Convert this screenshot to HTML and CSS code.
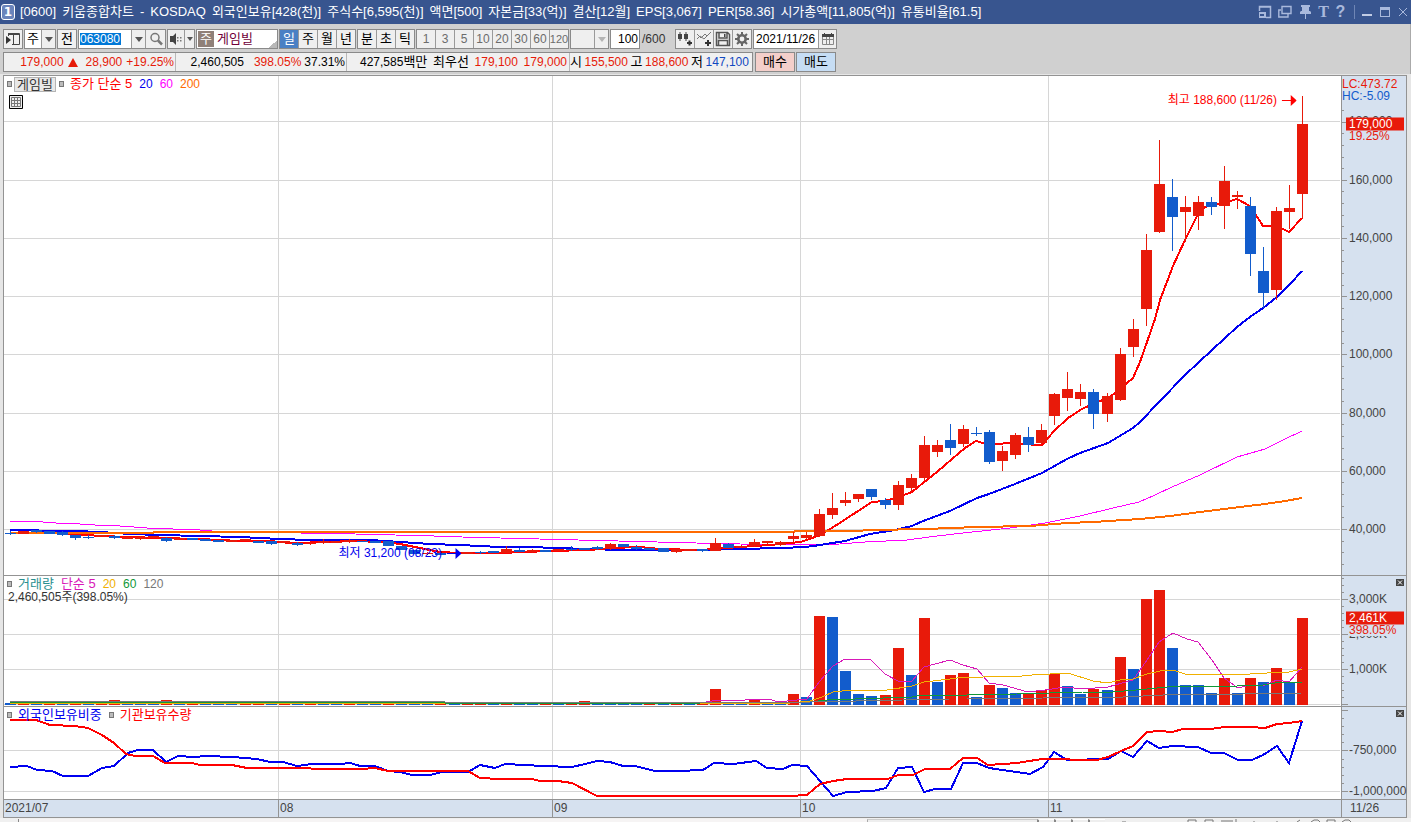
FILE: index.html
```html
<!DOCTYPE html>
<html lang="ko">
<head>
<meta charset="utf-8">
<title>[0600] 키움종합차트</title>
<link rel="stylesheet" href="styles.css">
</head>
<body>
<header class="titlebar">
  <span class="win-no">1</span>
  <h1 class="title"><span>[0600]</span><span>키움종합차트</span><span>-</span><span>KOSDAQ</span><span>외국인보유[428(천)]</span><span>주식수[6,595(천)]</span><span>액면[500]</span><span>자본금[33(억)]</span><span>결산[12월]</span><span>EPS[3,067]</span><span>PER[58.36]</span><span>시가총액[11,805(억)]</span><span>유통비율[61.5]</span></h1>
  <div class="win-tools">
    <button aria-label="화면 분할"><svg width="14" height="14" viewBox="0 0 14 14"><path d="M1.500 6V1.500h11v11H8M1 2h12" fill="none" stroke="#a9b9dc" stroke-width="1.500"/><path d="M1 7h7v6H1z" fill="#a9b9dc"/><path d="M2 9h4v2H2z" fill="#38558f"/></svg></button>
    <button aria-label="화면 복사"><svg width="14" height="14" viewBox="0 0 14 14"><path d="M4 1.500h9v7H4zM3 5H.8v7H10V9" fill="none" stroke="#a9b9dc" stroke-width="1.400"/></svg></button>
    <button aria-label="고정"><svg width="14" height="14" viewBox="0 0 14 14"><path d="M3 0h9v2h-1v4h1l1 1v2H2V7l1-1h1V2H3zM7 9h1v5H7z" fill="#a9b9dc"/></svg></button>
    <button class="glyph" aria-label="글꼴">T</button>
    <button class="glyph glyph-q" aria-label="도움말">?</button>
    <span class="divider"></span>
    <button aria-label="최소화"><svg width="12" height="14" viewBox="0 0 12 14"><path d="M1 9h10v2H1z" fill="#c1cce4"/></svg></button>
    <button aria-label="최대화"><svg width="12" height="14" viewBox="0 0 12 14"><path d="M1 2h10v10H1zM2 5v6h8V5z" fill="#a9b9dc" fill-rule="evenodd"/></svg></button>
    <button aria-label="닫기"><svg width="12" height="14" viewBox="0 0 12 14"><path d="M2 3l8 8M10 3l-8 8" stroke="#a9b9dc" fill="none"/></svg></button>
  </div>
</header>

<section class="toolbar">
  <div class="tools">
    <button class="box" aria-label="패널"><svg width="16" height="16" viewBox="0 0 16 16"><path d="M3.500 2.500h11v11H7M3.500 2v3M8.500 4v10M3 3.500h12" fill="none" stroke="#444"/><path d="M1 5l5 4-5 4z" fill="#333"/></svg></button>
    <div class="group g-kind">
      <button class="cell white">주</button><button class="cell w14" aria-label="종류 선택"><i class="arrow"></i></button>
    </div>
    <button class="box">전</button>
    <div class="group g-code">
      <input class="code" aria-label="종목코드" value="063080"><button class="cell w14" aria-label="종목 목록"><i class="arrow"></i></button><button class="cell w20" aria-label="검색"><svg width="16" height="16" viewBox="0 0 16 16"><circle cx="7" cy="6.500" r="4" fill="none" stroke="#777" stroke-width="1.500"/><path d="M10 9.500l4 4" stroke="#777" stroke-width="2.500"/></svg></button>
    </div>
    <div class="group g-sound">
      <button class="cell" aria-label="소리"><svg width="14" height="14" viewBox="0 0 14 14"><path d="M1 4h3l3-3v12l-3-3H1z" fill="#444"/><path d="M8 5h1.500v1.500H8zM8 8h1.500v1.500H8zM11 5h1.500v1.500H11zM11 8h1.500v1.500H11z" fill="#777"/></svg></button><button class="cell w10" aria-label="소리 선택"><i class="arrow small"></i></button>
    </div>
    <div class="name-box"><span class="badge">주</span><span class="stock">게임빌</span></div>
    <div class="group g-period"><button class="cell on">일</button><button class="cell">주</button><button class="cell">월</button><button class="cell">년</button></div>
    <div class="group g-tick"><button class="cell">분</button><button class="cell">초</button><button class="cell">틱</button></div>
    <div class="group g-minutes off"><button class="cell">1</button><button class="cell">3</button><button class="cell">5</button><button class="cell">10</button><button class="cell">20</button><button class="cell">30</button><button class="cell">60</button><button class="cell tight">120</button></div>
    <div class="group g-combo off"><span class="cell"></span><button class="cell w14" aria-label="주기 선택" disabled><i class="arrow pale"></i></button></div>
    <input class="count" aria-label="조회 개수" value="100">
    <span class="total">/600</span>
    <div class="group g-icons">
      <button class="cell" aria-label="차트 추가"><svg width="16" height="16" viewBox="0 0 16 16"><path d="M1 3h4v5H1zM2.500 1h1v9h-1zM7 3h4v5H7zM8.500 1h1v9h-1z" fill="#444"/><path d="M10 11h5v2h-5zM11.500 9.500h2v5h-2z" fill="#333"/></svg></button><button class="cell" aria-label="지표 추가"><svg width="16" height="16" viewBox="0 0 16 16"><path d="M1 3l4 4 4-4 2 2 4-4M1 8l3-3 4 3 3-3" fill="none" stroke="#777"/><path d="M9 11h6v2H9zM11 9h2v6h-2z" fill="#333"/></svg></button><button class="cell" aria-label="저장"><svg width="16" height="16" viewBox="0 0 16 16"><path d="M1.500 1.500h11l2 2v11h-13zM4 2v5h8V2M3.500 14V9.500h9V14" fill="none" stroke="#555" stroke-width="1.500"/><path d="M9 3h1.500v3H9z" fill="#444"/></svg></button><button class="cell" aria-label="설정"><svg width="16" height="16" viewBox="0 0 16 16"><circle cx="8" cy="8" r="3.700" fill="none" stroke="#666" stroke-width="2.600"/><path d="M8 1v3M8 12v3M1 8h3M12 8h3M3 3l2 2M11 11l2 2M13 3l-2 2M5 11l-2 2" stroke="#666" stroke-width="2"/></svg></button>
    </div>
    <div class="group g-date">
      <input class="day" aria-label="날짜" value="2021/11/26"><button class="cell" aria-label="달력"><svg width="14" height="14" viewBox="0 0 14 14"><path d="M1.500 3.500h11v9h-11zM2 7.500h10M5.500 5v7M8.500 5v7" fill="none" stroke="#888"/><path d="M1 2h12v3H1zM3 1h1v3H3zM10 1h1v3h-1z" fill="#444"/></svg></button>
    </div>
  </div>
  <div class="quotes">
    <div class="quote-bar">
      <div class="q q1"><span class="up">179,000</span><i class="tri"></i><span class="up amt">28,900</span><span class="up">+19.25%</span></div>
      <div class="q q2"><span>2,460,505</span><span class="up rate">398.05%</span><span>37.31%</span></div>
      <div class="q q3"><span>427,585<b>백만</b></span><b>최우선</b><span class="up">179,100</span><span class="up">179,000</span></div>
      <div class="q q4"><b>시</b><span class="up">155,500</span><b>고</b><span class="up">188,600</span><b>저</b><span class="down">147,100</span></div>
    </div>
    <button class="order buy">매수</button>
    <button class="order sell">매도</button>
  </div>
</section>

<main class="chart">
  <section class="plot" id="price-plot">
    <div class="legend">
      <i class="mark"></i><button class="tag">게임빌</button><i class="mark"></i>
      <span class="c-red">종가 단순 5</span><span class="num c-blue">20</span><span class="num c-magenta">60</span><span class="num c-orange">200</span>
    </div>
    <button class="grid-button" aria-label="표 보기"><svg width="14" height="14" viewBox="0 0 14 14"><path d="M.5.5h13v13H.5z" fill="#eee" stroke="#000"/><path d="M2.500 2.500h9v9h-9zM2.500 5.500h9M2.500 8.500h9M5.500 3v8M8.500 3v8" fill="none" stroke="#777"/></svg></button>
  </section>
  <section class="axis" id="price-axis"></section>
  <section class="plot" id="volume-plot">
    <div class="legend">
      <i class="mark"></i><span class="c-teal">거래량</span><span class="c-violet">단순 5</span><span class="num c-gold">20</span><span class="num c-green">60</span><span class="num c-gray">120</span>
    </div>
    <div class="volume-now">2,460,505주(398.05%)</div>
  </section>
  <section class="axis" id="volume-axis"><button class="close" aria-label="거래량 닫기"><svg width="8" height="7" viewBox="0 0 8 7"><path d="M2 1.500l4 4M6 1.500l-4 4" stroke="#fff"/></svg></button></section>
  <section class="plot" id="holding-plot">
    <div class="legend">
      <i class="mark"></i><span class="c-blue">외국인보유비중</span><i class="mark"></i><span class="c-red">기관보유수량</span>
    </div>
  </section>
  <section class="axis" id="holding-axis"><button class="close" aria-label="보유 닫기"><svg width="8" height="7" viewBox="0 0 8 7"><path d="M2 1.500l4 4M6 1.500l-4 4" stroke="#fff"/></svg></button></section>
  <section class="months" id="months"></section>
  <section class="last-day">11/26</section>
</main>

<footer class="scroller">
  <button class="left" aria-label="왼쪽"></button><div class="track"></div><div class="thumb"></div>
  <button class="b" aria-label="처음"></button><button class="b" aria-label="이전"></button><button class="b" aria-label="다음"></button><button class="b" aria-label="끝"></button>
  <svg class="strip" height="4" width="305" viewBox="0 0 305 4"><path d="M17 3h4M83 3V1h8v2M100 3V1h8v2M116 2h12M131 4V0M148 3h2M171 3h2M192 3l3-2M206 3l3-2h4l2 2M222 3V1h8v2M237 3l3-2h4l2 2" fill="none" stroke="#777"/></svg>
</footer>
<script src="chart.js"></script>
</body>
</html>
```

FILE: styles.css
```css
* { box-sizing: border-box; }
html, body { height: 100%; }
body {
  margin: 0;
  display: flex;
  flex-direction: column;
  background: #e6e6e6;
  color: #000;
  font: 12px/14px "Liberation Sans", "Noto Sans CJK KR", sans-serif;
  white-space: nowrap;
  overflow: hidden;
}
button, input { font: inherit; color: inherit; border: 0; padding: 0; margin: 0; border-radius: 0; background: none; outline: 0; min-width: 0; }
i { font-style: normal; }
b { font-weight: 400; font-size: 13px; }

.titlebar { height: 24px; flex: none; display: flex; align-items: center; background: #38558f; color: #fff; padding: 0 2px 0 1px; }
.win-no { width: 14px; height: 16px; border: 1px solid #fff; border-radius: 3px; background: #6a84bb; font: bold 12px/14px "DejaVu Sans", sans-serif; text-align: center; }
.title { margin: 0 0 0 5px; font-size: 13px; font-weight: 400; display: flex; gap: 6px; }
.win-tools { margin-left: auto; display: flex; align-items: center; gap: 6px; }
.win-tools button { height: 14px; line-height: 14px; }
.win-tools svg { display: block; }
.win-tools .glyph { font: bold 16px/14px "Liberation Serif", serif; color: #a9b9dc; width: 11px; }
.win-tools .glyph-q { font-family: "Liberation Sans", sans-serif; }
.divider { width: 1px; height: 14px; background: #6f86b5; margin-left: 2px; }

.toolbar { height: 50px; flex: none; background: #d0d0d0; border-right: 1px solid #aaa; padding: 5px 0 0 3px; display: flex; flex-direction: column; gap: 3px; }
.tools { display: flex; height: 20px; gap: 1px; font-size: 13px; }
.box, .group, .name-box, .count { border: 1px solid #8a8a8a; background: #f0f0f0; display: flex; height: 20px; flex: none; }
.box { width: 20px; align-items: center; justify-content: center; }
.cell { flex: 1; display: flex; align-items: center; justify-content: center; background: #efefef; }
.cell + .cell, input + .cell { border-left: 1px solid #9a9a9a; }
.cell.w14 { flex: 0 0 14px; }
.cell.w10 { flex: 0 0 10px; }
.cell.w20 { flex: 0 0 20px; }
.g-kind { width: 32px; }
.g-code { width: 88px; }
.g-sound { width: 28px; }
.g-period { width: 77px; }
.g-tick { width: 58px; }
.g-minutes { width: 153px; font-size: 12px; }
.g-minutes .tight { font-size: 11px; }
.g-combo { width: 39px; }
.g-icons { width: 77px; }
.g-date { width: 84px; font-size: 12px; }
.g-date .cell { flex: 0 0 18px; }
.white { background: #fff; }
.cell.on { background: #4a80c4; color: #fff; }
.off { color: #6c6c6c; }
.arrow { border: 4px solid transparent; border-top: 5px solid #555; border-bottom: 0; }
.arrow.small { border-width: 4px 3px 0; }
.arrow.pale { border-top-color: #b4b4b4; }
.code { flex: 1; font-size: 12px; color: #fff; background: linear-gradient(#0078d7, #0078d7) 1px 3px / 41px 12px no-repeat #fff; padding-left: 1px; }
.name-box { width: 82px; background: linear-gradient(135deg, transparent 50%, #b8b8b8 50%) right bottom / 8px 8px no-repeat #fff; padding: 1px; gap: 3px; line-height: 15px; }
.badge { width: 16px; background: #8f8078; color: #fff; text-align: center; }
.stock { color: #700038; }
.count { width: 30px; background: #fff; font-size: 12px; text-align: right; padding-right: 1px; }
.total { width: 33px; font-size: 12px; line-height: 20px; color: #333; padding-left: 1px; }
.day { flex: 1; background: #fff; padding-left: 2px; }

.quotes { display: flex; height: 20px; gap: 2px; }
.quote-bar { display: flex; width: 750px; border: 1px solid #8a8a8a; background: #f0f0f0; }
.q { display: flex; align-items: center; border-right: 1px solid #b8b8b8; }
.q:last-child { border-right: 0; }
.q1 { width: 172px; justify-content: flex-end; gap: 4px; padding-right: 1px; }
.q2 { width: 171px; justify-content: flex-end; gap: 3px; padding-right: 1px; }
.q3 { width: 223px; justify-content: space-between; padding: 0 2px 0 13px; }
.q4 { flex: 1; justify-content: space-between; padding: 0 3px 0 0; }
.rate { margin-left: 7px; }
.amt { margin-left: 4px; }
.up { color: #e61a08; }
.down { color: #1048c0; }
.tri { border: 5px solid transparent; border-bottom: 9px solid #e61a08; border-top: 0; }
.order { width: 40px; border: 1px solid #8a8a8a; font-size: 13px; }
.buy { background: #f4cfca; }
.sell { background: #c6ddf4; margin-left: -1px; }

.chart { flex: 1; min-height: 0; margin: 1px 4px 0 3px; border: 1px solid #939393; background: #939393; display: grid; grid-template-columns: 1fr 64px; grid-template-rows: 499fr 130fr 92fr 17px; gap: 1px; }
.plot { position: relative; background: #fff; min-height: 0; min-width: 0; }
.plot > svg, .axis > svg { position: absolute; inset: 0; width: 100%; height: 100%; display: block; }
.plot polyline { fill: none; shape-rendering: crispEdges; stroke-width: 2; }
.plot polyline.thin { stroke-width: 1; }
.plot rect, .axis rect { shape-rendering: crispEdges; }
.axis { position: relative; background: #d6e1ef; color: #444; min-height: 0; }
.label { position: absolute; left: 7px; line-height: 12px; transform: translateY(-50%); }
.label.edge { left: 0; }
.label.cover { background: #d6e1ef; }
.label.tagged { left: 4px; right: 2px; padding-left: 3px; line-height: 13px; background: #e81a0a; color: #fff; }
.close { position: absolute; right: 2px; top: 3px; width: 8px; height: 7px; background: #444; line-height: 0; }
.close svg { display: block; }
.legend { position: absolute; z-index: 1; left: 3px; top: 1px; display: flex; align-items: center; gap: 7px; height: 14px; font-size: 13px; }
.num { font-size: 12px; }
.mark { width: 5px; height: 6px; border: 1px solid #777; background: #bbb; margin-right: -1px; }
.tag { height: 15px; line-height: 13px; width: 42px; background: #e8e8e8; border: 1px solid #b4b4b4; color: #333; margin: 0 -4px; }
.grid-button { position: absolute; z-index: 1; left: 5px; top: 19px; height: 14px; line-height: 0; }
.volume-now { position: absolute; z-index: 1; left: 4px; top: 14px; color: #333; }
.note { position: absolute; z-index: 1; transform: translate(-100%, -50%); display: flex; align-items: center; gap: 5px; }
.c-red { color: #f00; }
.c-blue { color: #00e; }
.c-magenta { color: #f0f; }
.c-orange { color: #ff6a00; }
.c-teal { color: #289090; }
.c-violet { color: #d818b8; }
.c-gold { color: #f0b000; }
.c-green { color: #109838; }
.c-gray { color: #777; }
.months, .last-day { background: #d6e1ef; color: #444; line-height: 16px; position: relative; }
.months span { position: absolute; top: 0; bottom: 0; border-left: 1px solid #939393; padding-left: 1px; }
.months span:first-child { border-left: 0; }
.last-day { padding-left: 8px; }

.scroller { height: 4px; flex: none; display: flex; overflow: hidden; padding: 1px 1px 0 4px; background: #f0f0f0; }
.scroller .left { width: 15px; height: 18px; background: #f0f0f0; border-right: 1px solid #888; }
.track { flex: 849; background: #f6f4f4; }
.thumb { flex: 169; height: 18px; border-left: 1px solid #aaa; border-top: 1px solid #ccc; background: #eee; }
.scroller .b { width: 17px; height: 18px; border-left: 2px solid #888; border-top: 1px solid #fff; background: #eee; }
.strip { flex: none; }
```

FILE: chart.js
```javascript
const NS = 'http://www.w3.org/2000/svg';
const RED = '#e81a0a', BLUE = '#125ccc', GRID = '#d6d6d6', TICK = '#939393';
const PLOT_X = 4, PLOT_W = 1337;

// u = rising, d = falling; body top, body bottom, wick top, wick bottom
const candles = `d533,534,531,535 u531,534 d530,532,530,533 d531,534 d532,535,531,536 d535,538,535,540 d537,538,535,539 u535,537 d536,538,535,539 u537,539
u537,539,536,540 u536,538 d538,541,537,542 u538,540 d538,540 d539,541 d540,542 u540,542 u539,541 d541,543
d541,544,541,545 u541,543 d543,545,542,546 u543,544,542,545 u541,543,539,544 u541,543 u540,542,539,543 d541,542 d541,543 d541,546
d546,550 d550,554 u553,554,552,555 d553,555 d553,554 u552,554 d552,553,551,554 d551,553 u549,553,546,553 d550,552,548,552
u550,552,549,553 d550,552 u549,551 d549,550,546,551 d548,550 d547,549,546,550 u544,549,543,550 d544,547 d547,549,545,550 d548,550
d548,552 u549,552,549,553 u549,551 d549,551,549,552 u543,551,538,551 d544,548,543,548 u546,548,545,548 u542,546,539,547 u541,543,541,544 u542,545,541,546
u536,539,532,542 u535,538,532,539 u514,536,509,537 u508,515,493,519 u500,503,492,506 u494,499,494,502 d489,497,489,500 d500,505,498,509 u485,505,481,510 u478,488,474,492
u445,478,436,481 u445,452,440,457 d440,448,424,455 u429,444,425,447 d433,434,427,436 d432,462,430,464 u451,461,446,471 u435,455,433,459 d437,445,427,452 u430,443,424,444
u394,416,393,425 u389,398,372,411 u392,399,384,406 d392,414,389,429 u396,414,393,422 u354,400,348,401 u329,347,319,357 u250,309,234,326 u184,232,140,233 d197,217,179,251
u207,212,196,242 u202,216,196,230 d202,207,197,215 u181,206,166,229 u195,197,191,209 d206,254,197,276 d271,293,247,308 u211,290,207,300 u208,212,185,229 u124,194,96,219`
  .split(/\s+/).map(s => ({ up: s[0] === 'u', v: s.slice(1).split(',').map(Number) }));

const volumes = `d703 u703 d703 u703 d703 u703 d703 u703 u700 d703 d703 d703 u700 d703 u703 d703 d703 d703 u703 u703
d703 u703 d703 u703 d703 d703 u703 d703 d703 u701 d703 d703 d703 u703 d703 u703 u703 d703 u703 d703
d703 u703 d703 u703 u701 d703 d703 d703 d703 u703 d703 u703 d703 u703 u689 d702 d703 u699 d702 d703
u694 d697 u616 d617 d671 d694 d696 u695 u648 d675 u618 d682 u675 u673 d697 u685 d688 d693 u694 u690
u674 d686 d694 u689 d690 u657 d669 u599 u590 d648 d685 d685 d693 u678 d693 u678 d682 u668 d682 u618`
  .split(/\s+/).map(s => ({ up: s[0] === 'u', y: +s.slice(1) }));

const jumps = [18, 34, 50, 67, 84];
const leftOf = i => 5 + 13 * i + jumps.filter(j => i >= j).length;

function el(name, attrs, parent) {
  const e = document.createElementNS(NS, name);
  for (const k in attrs) e.setAttribute(k, attrs[k]);
  parent.append(e);
  return e;
}
function surface(id, x, y, w, h) {
  const host = document.getElementById(id);
  const svg = el('svg', { viewBox: `${x} ${y} ${w} ${h}`, preserveAspectRatio: 'none' }, host);
  return svg;
}
const box = (svg, x, y, w, h, fill) => el('rect', { x, y, width: w, height: h, fill }, svg);
const line = (svg, color, points, thin) => el('polyline', { points, stroke: color, class: thin ? 'thin' : 'thick' }, svg);
function grid(svg, ys, top, h) {
  ys.forEach(y => box(svg, PLOT_X, y, 1336, 1, GRID));
  [278, 552, 800, 1048].forEach(x => box(svg, x, top, 1, h, GRID));
}
function label(id, text, y, top, h, cls, color) {
  const s = document.createElement('span');
  s.className = 'label ' + (cls || '');
  s.textContent = text;
  s.style.top = (y - top) / h * 100 + '%';
  if (color) s.style.color = color;
  document.getElementById(id).append(s);
}
function note(html, x, y, cls) {
  const s = document.createElement('div');
  s.className = 'note ' + cls;
  s.innerHTML = html;
  s.style.left = (x - PLOT_X) / PLOT_W * 100 + '%';
  s.style.top = (y - 76) / 499 * 100 + '%';
  document.getElementById('price-plot').append(s);
}

// Price
const p = surface('price-plot', PLOT_X, 76, PLOT_W, 499);
grid(p, [121, 180, 238, 296, 354, 413, 471, 529], 76, 499);
line(p, '#f0f', '10,521 30,521 56,523 80,524 95,525 120,526 147,528 173,529 200,530 212,531 300,533 355,534 395,535 434,536 462,537 500,538 539,539 578,540 618,541 657,542 696,543 740,544 800,545 840,544 865,542 907,540 937,536 963,533 1010,528 1045,523 1080,516 1113,508 1139,502 1155,495 1172,487 1200,475 1237,457 1265,449 1285,439 1302,431', true);
line(p, '#0000f0', '10,530 37,530 40,531 75,531 101,532 130,534 160,535 200,536 240,537 280,539 310,540 370,540 400,542 430,544 460,545 500,547 530,547 555,548 590,549 620,550 700,550 740,549 780,548 806,547 820,545 845,541 870,534 895,530 912,526 923,521 950,511 977,498 989,494 1015,484 1042,473 1067,459 1080,453 1108,443 1133,428 1140,422 1160,401 1185,375 1212,350 1237,327 1250,317 1263,308 1277,297 1290,284 1302,271');
line(p, '#f00', '10,533 60,533 88,535 100,536 130,537 160,538 200,539 240,541 270,541 290,543 330,542 350,541 384,542 400,544 420,548 440,552 460,553 500,553 550,551 590,550 610,548 640,547 660,549 700,550 740,547 770,545 800,542 807,540 820,535 835,526 872,502 885,501 895,498 912,492 923,483 937,472 952,459 965,448 976,441 983,443 997,444 1010,443 1020,444 1042,445 1054,431 1068,418 1082,409 1095,403 1108,398 1115,393 1127,383 1133,378 1140,362 1155,319 1160,300 1173,266 1185,240 1197,216 1205,207 1212,205 1223,203 1237,199 1250,206 1263,226 1277,226 1289,232 1302,218');
line(p, '#ff6a00', '10,533 153,533 154,532 794,532 795,531 855,531 872,530 925,529 977,527 1030,526 1067,523 1093,522 1140,519 1170,516 1200,512 1240,507 1265,504 1285,501 1302,498');
candles.forEach((c, i) => {
  const x = leftOf(i), [t, b, hi = t, lo = b] = c.v, col = c.up ? RED : BLUE;
  box(p, x, t, 11, b - t, col);
  box(p, x + 5, hi, 1, lo - hi, col);
});
const arrow = c => `<svg width="15" height="11" viewBox="0 0 15 11"><path d="M0 5h10v1H0zM9 0l6 5.500-6 5.500z" fill="${c}"/></svg>`;
note('<span>최고 188,600 (11/26)</span>' + arrow('#f00'), 1297, 100, 'c-red');
note('<span>최저 31,200 (08/23)</span>' + arrow('#00e'), 462, 553, 'c-blue');

const pa = surface('price-axis', 1342, 76, 64, 499);
for (let k = -3; k < 41; k++) {
  const y = Math.round(529 - k * 11.64);
  if (y > 105 && y < 573) box(pa, 1342, y, k % 5 ? 2 : 5, 1, TICK);
}
['40,000', '60,000', '80,000', '100,000', '120,000', '140,000', '160,000', '180,000'].forEach((t, i) =>
  label('price-axis', t, [529, 471, 413, 354, 296, 238, 180, 121][i], 76, 499));
label('price-axis', 'LC:473.72', 84, 76, 499, 'edge', RED);
label('price-axis', 'HC:-5.09', 96, 76, 499, 'edge', BLUE);
label('price-axis', '19.25%', 136, 76, 499, '', RED);
label('price-axis', '179,000', 124, 76, 499, 'tagged');

// Volume
const v = surface('volume-plot', PLOT_X, 576, PLOT_W, 130);
grid(v, [599, 634, 669, 704], 576, 130);
volumes.forEach((d, i) => box(v, leftOf(i), d.y, 11, 705 - d.y, d.up ? RED : BLUE));
line(v, '#d818b8', '10,703 640,703 700,703 712,701 745,700 750,699 769,699 775,701 787,701 807,699 819,682 833,666 845,659 870,659 885,674 898,681 912,681 924,667 950,660 963,665 977,669 989,683 1003,685 1028,692 1045,690 1065,687 1083,689 1108,687 1122,683 1133,680 1147,660 1159,642 1173,633 1187,639 1198,642 1212,660 1224,678 1238,688 1250,685 1265,685 1277,680 1289,682 1302,667', true);
line(v, '#f0b000', '10,703 790,703 810,701 822,697 833,692 852,690 887,690 912,686 924,682 950,679 965,677 970,678 997,676 1022,676 1032,675 1068,673 1093,681 1108,683 1120,680 1133,679 1147,674 1160,671 1173,670 1185,674 1217,674 1250,674 1267,673 1289,672 1302,669', true);
line(v, '#109838', '10,702 320,702 445,703 700,703 810,702 827,700 883,698 912,697 923,695 967,695 1017,694 1083,692 1113,692 1147,689 1167,687 1197,686 1237,686 1263,685 1275,683 1302,682', true);
line(v, '#777', '10,701 320,701 445,702 810,702 903,700 950,699 967,699 1043,698 1053,697 1123,697 1163,695 1173,694 1243,694 1302,693', true);
const va = surface('volume-axis', 1342, 576, 64, 130);
for (let k = 0; k < 19; k++) box(va, 1342, 704 - k * 7, k % 5 ? 2 : 6, 1, TICK);
label('volume-axis', '3,000K', 599, 576, 130);
label('volume-axis', '2,000K', 634, 576, 130);
label('volume-axis', '1,000K', 669, 576, 130);
label('volume-axis', '398.05%', 630, 576, 130, 'cover', RED);
label('volume-axis', '2,461K', 618, 576, 130, 'tagged');

// Foreign and institutional holdings
const h = surface('holding-plot', PLOT_X, 707, PLOT_W, 92);
grid(h, [750, 791], 707, 92);
line(h, '#0000f0', '10,767 27,766 37,770 52,771 63,776 88,776 102,768 114,766 128,753 138,750 153,750 166,762 178,756 193,757 207,756 233,757 257,759 270,762 283,762 297,766 312,764 340,764 350,763 360,766 375,766 388,771 400,772 412,775 430,775 442,772 468,772 480,765 495,768 505,764 543,766 572,767 585,764 597,761 610,762 623,766 635,766 655,771 677,771 703,770 714,763 733,764 756,761 767,768 783,769 792,765 807,766 820,781 833,796 847,792 873,791 886,788 898,768 912,767 924,792 935,789 951,789 963,763 977,763 989,768 1030,774 1043,767 1054,752 1067,760 1108,759 1121,751 1133,757 1147,741 1159,748 1172,746 1198,747 1211,753 1224,753 1238,760 1252,760 1263,755 1277,746 1289,763 1302,721');
line(h, '#f00', '10,720 36,720 50,725 75,726 88,728 102,735 114,743 126,754 135,756 153,756 165,763 192,763 200,765 232,765 247,768 310,768 312,769 362,769 375,768 388,771 468,771 480,778 500,779 532,779 540,781 558,781 572,783 597,796 790,796 807,795 820,784 833,781 847,779 888,779 898,775 913,775 925,769 950,769 963,758 977,758 988,765 1017,763 1042,759 1097,760 1108,757 1121,751 1133,746 1147,732 1160,731 1172,732 1183,729 1210,729 1225,727 1250,727 1265,728 1277,724 1289,723 1302,721');
const ha = surface('holding-axis', 1342, 707, 64, 92);
for (let k = 0; k < 11; k++) box(ha, 1342, 791 - Math.round(k * 8.1), k % 5 ? 2 : 6, 1, TICK);
label('holding-axis', '-750,000', 750, 707, 92);
label('holding-axis', '-1,000,000', 791, 707, 92);

// Month axis
[['2021/07', 4], ['08', 278], ['09', 552], ['10', 800], ['11', 1048]].forEach(([t, x]) => {
  const s = document.createElement('span');
  s.textContent = t;
  s.style.left = (x - PLOT_X) / PLOT_W * 100 + '%';
  document.getElementById('months').append(s);
});
```
